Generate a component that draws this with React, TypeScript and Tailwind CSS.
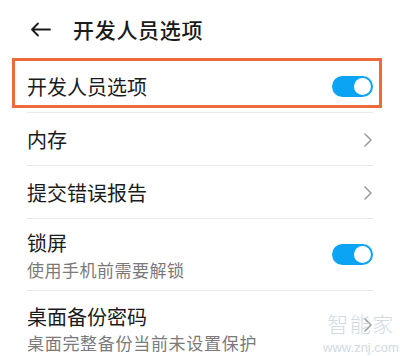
import React from 'react';

const font = { fontFamily: '"Noto Sans CJK SC", "Noto Sans", sans-serif' };

const Toggle: React.FC = () => (
  <div className="w-[41px] h-[21px] rounded-full bg-[#0ba3f3] flex items-center justify-end pr-[2px]">
    <div className="w-[17px] h-[17px] rounded-full bg-white" />
  </div>
);

const Chevron: React.FC = () => (
  <svg width="10" height="16" viewBox="0 0 10 16" fill="none">
    <path d="M2 2l6 6-6 6" stroke="#9a9a9a" strokeWidth="1.5" strokeLinecap="round" strokeLinejoin="round" />
  </svg>
);

export default function App() {
  return (
    <div className="relative w-[400px] h-[356px] overflow-hidden bg-white text-[#1b1b1b]" style={font}>
      {/* header */}
      <div className="h-[60px] flex items-center pl-[30px] pb-[2px]">
        <svg width="21" height="15" viewBox="0 0 21 15" fill="none">
          <path d="M20 7.5H2M8 1.5L2 7.5l6 6" stroke="#1b1b1b" strokeWidth="1.8" strokeLinecap="round" strokeLinejoin="round" />
        </svg>
        <span className="ml-[22px] text-[21px] font-medium tracking-[0.7px] leading-none">开发人员选项</span>
      </div>

      <div className="px-[27px]">
        <div className="h-[53px] flex items-center justify-between border-b border-[#e9e9e9] pt-[1px]">
          <span className="text-[20px] leading-none">开发人员选项</span>
          <Toggle />
        </div>
        <div className="h-[53px] flex items-center justify-between border-b border-[#e9e9e9] pt-[2px]">
          <span className="text-[20px] leading-none">内存</span>
          <Chevron />
        </div>
        <div className="h-[53px] flex items-center justify-between border-b border-[#e9e9e9] pt-[1px]">
          <span className="text-[20px] leading-none">提交错误报告</span>
          <Chevron />
        </div>
        <div className="h-[72px] flex items-center justify-between border-b border-[#e9e9e9]">
          <div className="flex flex-col gap-[8px] pt-[1px]">
            <span className="text-[20px] leading-none">锁屏</span>
            <span className="text-[17px] leading-none text-[#7a7a7a] tracking-[0.5px]">使用手机前需要解锁</span>
          </div>
          <Toggle />
        </div>
        <div className="h-[72px] flex items-start justify-between pt-[16px]">
          <div className="flex flex-col gap-[7px]">
            <span className="text-[20px] leading-none">桌面备份密码</span>
            <span className="text-[17px] leading-none text-[#7a7a7a] tracking-[0.7px]">桌面完整备份当前未设置保护</span>
          </div>
          <div className="mt-[10px]">
            <Chevron />
          </div>
        </div>
      </div>

      {/* highlight annotation */}
      <div className="absolute left-[12px] top-[58px] w-[370px] h-[50px] border-[3px] border-[#ef6a3a]" />

      {/* watermark */}
      <div className="absolute left-[327px] top-[313px] w-[68px] flex flex-col items-center text-[#c5d3dc] opacity-80">
        <span className="text-[21px] font-light leading-none tracking-[1.5px]">智能家</span>
        <span className="text-[13px] leading-none mt-[7px]" style={{ fontFamily: '"Liberation Sans", sans-serif' }}>www.znj.com</span>
      </div>
    </div>
  );
}
